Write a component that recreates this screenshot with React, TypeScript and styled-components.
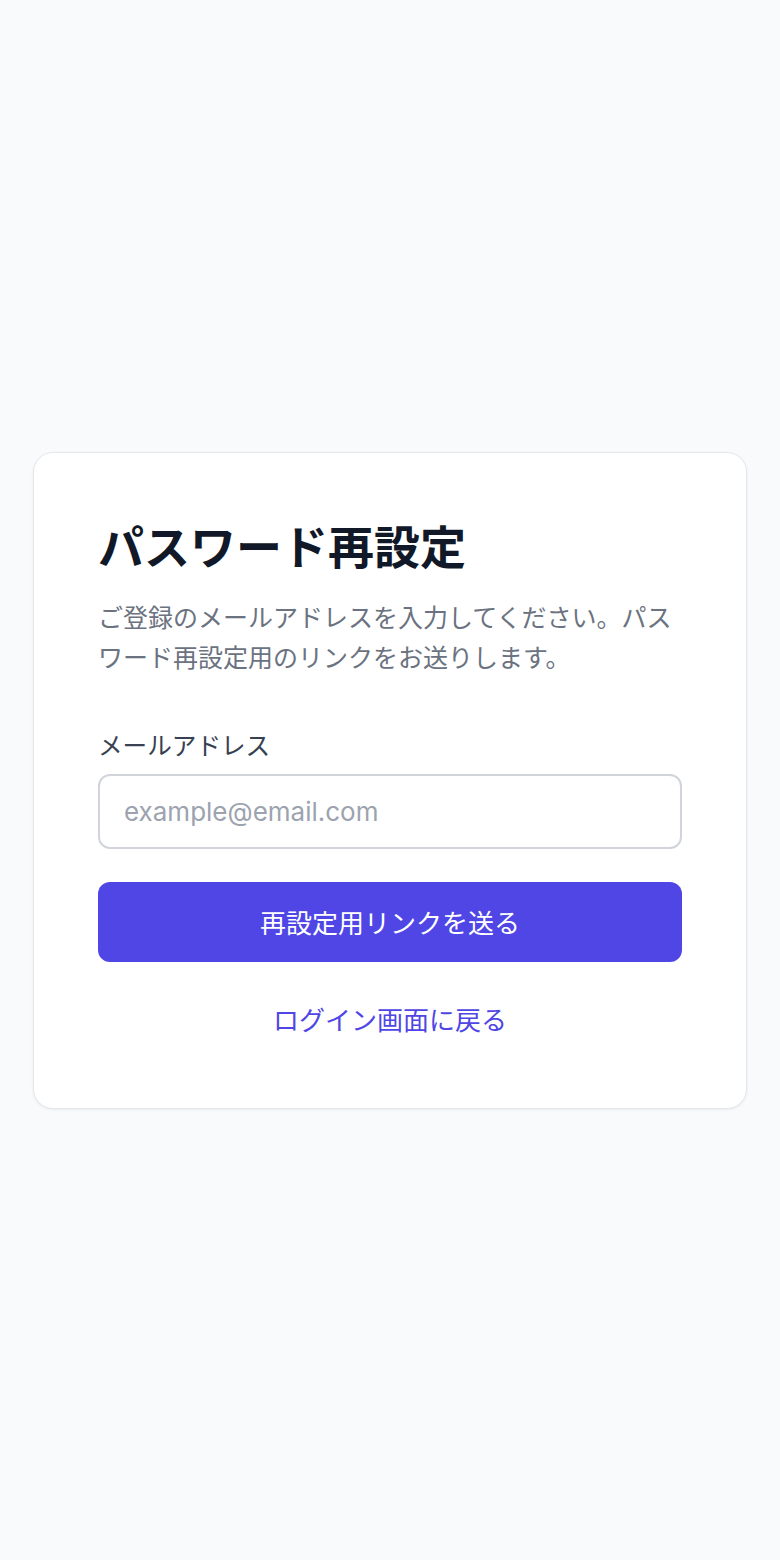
import React from "react";
import styled, { createGlobalStyle } from "styled-components";

const Global = createGlobalStyle`
  * { box-sizing: border-box; }
  html, body { margin: 0; padding: 0; background: #f9fafb; }
  body {
    font-family: Inter, "Noto Sans CJK JP", sans-serif;
    -webkit-font-smoothing: antialiased;
  }
`;

const Page = styled.main`
  min-height: 100vh;
  display: flex;
  align-items: center;
  justify-content: center;
  padding: 0 33px;
`;

const Card = styled.section`
  width: 100%;
  background: #ffffff;
  border: 1px solid #e5e7eb;
  border-radius: 20px;
  box-shadow: 0 1px 3px rgba(0, 0, 0, 0.06);
  padding: 64px 64px 67px;
  display: flex;
  flex-direction: column;
`;

const Title = styled.h1`
  margin: 0;
  font-size: 46px;
  line-height: 60px;
  font-weight: 700;
  color: #111827;
  letter-spacing: 0;
`;

const Description = styled.p`
  margin: 21px 0 0;
  font-size: 25px;
  line-height: 40px;
  color: #6b7280;
`;

const Field = styled.div`
  margin-top: 48px;
  display: flex;
  flex-direction: column;
  gap: 8px;
`;

const Label = styled.label`
  font-size: 24.6px;
  line-height: 40px;
  color: #374151;
`;

const Input = styled.input`
  height: 75px;
  width: 100%;
  border: 2px solid #d1d5db;
  border-radius: 12px;
  padding: 0 24px;
  font-family: Inter, "Noto Sans CJK JP", sans-serif;
  font-size: 26px;
  color: #111827;
  outline: none;
  background: #fff;
  &::placeholder { color: #9ca3af; }
`;

const Button = styled.button`
  margin-top: 33px;
  height: 80px;
  width: 100%;
  border: none;
  border-radius: 12px;
  background: #4f46e5;
  color: #ffffff;
  font-family: Inter, "Noto Sans CJK JP", sans-serif;
  font-size: 26px;
  cursor: pointer;
`;

const LinkRow = styled.div`
  margin-top: 39px;
  text-align: center;
`;

const BackLink = styled.a`
  font-size: 26px;
  line-height: 40px;
  color: #4f46e5;
  text-decoration: none;
`;

export default function App() {
  return (
    <>
      <Global />
      <Page>
        <Card>
          <Title>パスワード再設定</Title>
          <Description>
            ご登録のメールアドレスを入力してください。パスワード再設定用のリンクをお送りします。
          </Description>
          <Field>
            <Label htmlFor="email">メールアドレス</Label>
            <Input id="email" type="email" placeholder="example@email.com" />
          </Field>
          <Button type="button">再設定用リンクを送る</Button>
          <LinkRow>
            <BackLink href="#">ログイン画面に戻る</BackLink>
          </LinkRow>
        </Card>
      </Page>
    </>
  );
}
